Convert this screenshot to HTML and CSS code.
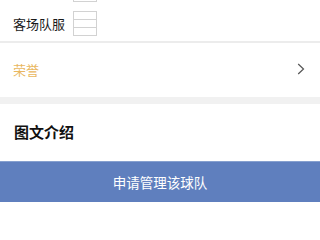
FILE: index.html
```html
<!DOCTYPE html>
<html lang="zh">
<head>
<meta charset="utf-8">
<link rel="stylesheet" href="styles.css">
</head>
<body>
<div class="page">
  <section class="jerseys">
    <div class="jersey-row">
      <span class="jersey-label"></span>
      <div class="jersey-box"><i></i><i></i><i></i></div>
    </div>
    <div class="jersey-row">
      <span class="jersey-label">客场队服</span>
      <div class="jersey-box"><i></i><i></i><i></i></div>
    </div>
  </section>
  <div class="honor-row">
    <span class="honor-label">荣誉</span>
    <svg class="chevron" width="8" height="12" viewBox="0 0 8 12"><path d="M1.2 1 L6.5 6 L1.2 11" fill="none" stroke="#555" stroke-width="1.2"/></svg>
  </div>
  <div class="gap-band"></div>
  <section class="intro">
    <h2 class="intro-title">图文介绍</h2>
  </section>
  <button class="apply-btn">申请管理该球队</button>
</div>
</body>
</html>
```
FILE: styles.css
```css
html, body {
  margin: 0;
  padding: 0;
  background: #ffffff;
}
.page {
  width: 320px;
  height: 202px;
  overflow: hidden;
  display: flex;
  flex-direction: column;
  font-family: "Noto Sans CJK SC", "Noto Sans", sans-serif;
}
.jerseys {
  margin-top: -23px;
  display: flex;
  flex-direction: column;
  gap: 9px;
  padding-bottom: 5px;
  border-bottom: 2px solid #ececec;
}
.jersey-row {
  display: flex;
  align-items: center;
  padding-left: 13px;
  height: 25px;
}
.jersey-label {
  font-size: 13px;
  color: #1a1a1a;
  width: 60px;
  line-height: 25px;
}
.jersey-box {
  width: 24px;
  height: 25px;
  box-sizing: border-box;
  border: 1px solid #d2d2d2;
  display: flex;
  flex-direction: column;
}
.jersey-box i {
  flex: 1;
  border-top: 1px solid #d2d2d2;
}
.jersey-box i:first-child {
  border-top: none;
}
.honor-row {
  height: 54px;
  display: flex;
  align-items: center;
  justify-content: space-between;
  padding: 0 15px 2px 13px;
  box-sizing: border-box;
}
.honor-label {
  font-size: 13px;
  color: #e9b760;
}
.chevron {
  display: block;
}
.gap-band {
  height: 7px;
  background: #f1f1f1;
}
.intro {
  height: 57px;
  display: flex;
  align-items: center;
  padding-left: 14px;
  padding-bottom: 2px;
  box-sizing: border-box;
}
.intro-title {
  margin: 0;
  font-size: 15px;
  font-weight: bold;
  color: #111;
}
.apply-btn {
  flex: 1;
  border: none;
  border-top: 1px solid #86a0cf;
  background: #5f7fbe;
  color: #ffffff;
  font-family: "Noto Sans CJK SC", "Noto Sans", sans-serif;
  font-size: 13.5px;
  padding: 0;
  margin: 0;
  width: 100%;
}
```
